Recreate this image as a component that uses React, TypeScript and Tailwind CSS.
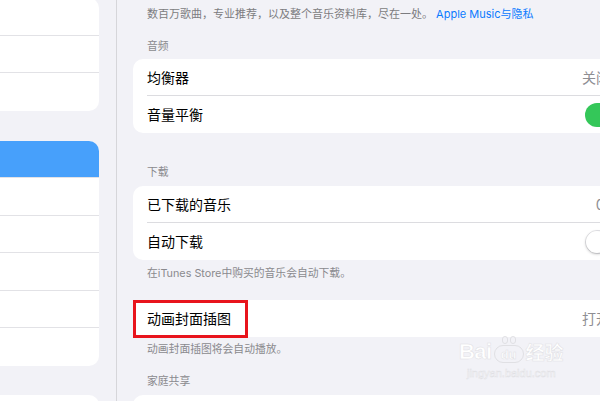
import { ChevronRight } from 'lucide-react'

const FONT = { fontFamily: 'Inter, "Noto Sans CJK SC", "Noto Sans", sans-serif' }

function SideCard({ rows, first, selected }: { rows: number; first?: boolean; selected?: number }) {
  return (
    <div className={`w-[99px] shrink-0 bg-white rounded-r-[10px] overflow-hidden ${first ? 'mt-[-2px]' : ''}`}>
      {Array.from({ length: rows }).map((_, i) => (
        <div
          key={i}
          className={`h-[37.5px] ${i < rows - 1 ? 'border-b border-[#e2e2e6]' : ''} ${
            selected === i ? 'bg-[#47a0fb] border-[#47a0fb]' : ''
          }`}
        />
      ))}
    </div>
  )
}

function Toggle({ on }: { on: boolean }) {
  return on ? (
    <div className="w-[40px] h-[24px] rounded-full bg-[#34c759]" />
  ) : (
    <div className="w-[40px] h-[24px] rounded-full border-[1.5px] border-[#e4e4e8] bg-white flex items-center">
      <div className="w-[22px] h-[22px] rounded-full bg-white shadow-[0_1px_3px_rgba(0,0,0,0.25)]" />
    </div>
  )
}

function Row({ label, right, last }: { label: string; right: React.ReactNode; last?: boolean }) {
  return (
    <div className="flex pl-[14px]">
      <div className={`flex-1 h-[37px] flex items-center justify-between pr-[16px] ${last ? '' : 'border-b border-[#dcdce0]'}`}>
        <span className="text-[14px] text-black">{label}</span>
        {right}
      </div>
    </div>
  )
}

function Value({ text }: { text: string }) {
  return (
    <span className="flex items-center gap-[3px] text-[14px] text-[#8e8e93]">
      {text}
      <ChevronRight size={12} strokeWidth={2.5} className="text-[#c4c4c7]" />
    </span>
  )
}

const Header = ({ children, className = '' }: { children: React.ReactNode; className?: string }) => (
  <div className={`pl-[14px] text-[10.8px] leading-[16px] text-[#8a8a8e] whitespace-nowrap ${className}`}>{children}</div>
)

export default function App() {
  return (
    <div className="w-[600px] h-[401px] overflow-hidden flex bg-[#f2f2f7] relative" style={FONT}>
      <div className="w-[117px] shrink-0 border-r border-[#d6d6da] flex flex-col">
        <SideCard rows={3} first />
        <div className="h-[30px] shrink-0" />
        <SideCard rows={6} selected={0} />
        <div className="h-[29px] shrink-0" />
        <SideCard rows={2} />
      </div>

      <div className="pl-[16px] flex flex-col">
        <div className="w-[508px]">
          <div className="pt-[6px] pl-[14px] text-[11px] leading-[16px] text-[#7c7c80] whitespace-nowrap">
            数百万歌曲，专业推荐，以及整个音乐资料库，尽在一处。 <span className="text-[#0a7aff]">Apple Music与隐私</span>
          </div>

          <Header className="mt-[17px] mb-[4px]">音频</Header>
          <div className="bg-white rounded-[10px]">
            <Row label="均衡器" right={<Value text="关闭" />} />
            <Row label="音量平衡" right={<Toggle on />} last />
          </div>

          <Header className="mt-[32px] mb-[5px]">下载</Header>
          <div className="bg-white rounded-[10px]">
            <Row label="已下载的音乐" right={<span className="text-[14px] text-[#8e8e93] mr-[-2px]">0 KB</span>} />
            <Row label="自动下载" right={<Toggle on={false} />} last />
          </div>
          <Header className="mt-[6px]">在iTunes Store中购买的音乐会自动下载。</Header>

          <div className="bg-white rounded-[10px] mt-[18px] relative">
            <Row label="动画封面插图" right={<Value text="打开" />} last />
            <div className="absolute left-0 top-0 w-[115px] h-[38px] border-[3px] border-[#e8141c]" />
          </div>
          <Header className="mt-[5px]">动画封面插图将会自动播放。</Header>

          <Header className="mt-[16px] mb-[5px]">家庭共享</Header>
          <div className="bg-white rounded-[10px] h-[40px]" />
        </div>
      </div>

      <div className="absolute left-[459px] top-[336px] flex flex-col items-center text-white [-webkit-text-stroke:0.5px_#e0e0e4] pointer-events-none">
        <div className="flex items-end gap-[2px] leading-none">
          <span className="text-[22px] font-bold tracking-tight" style={{ fontFamily: '"Liberation Sans", sans-serif' }}>Bai</span>
          <span className="flex flex-col items-center">
            <span className="flex gap-[2px] mb-[1px]">
              <span className="w-[6px] h-[8px] rounded-full border border-[#e0e0e4]" />
              <span className="w-[6px] h-[8px] rounded-full border border-[#e0e0e4]" />
            </span>
            <span className="w-[30px] h-[18px] rounded-full border border-[#e0e0e4] text-[13px] font-bold flex items-center justify-center" style={{ fontFamily: '"Liberation Sans", sans-serif' }}>du</span>
          </span>
          <span className="text-[19px] font-bold">经验</span>
        </div>
        <div className="text-[11px] leading-[14px] mt-[3px]" style={{ fontFamily: '"Liberation Sans", sans-serif' }}>jingyan.baidu.com</div>
      </div>
    </div>
  )
}
